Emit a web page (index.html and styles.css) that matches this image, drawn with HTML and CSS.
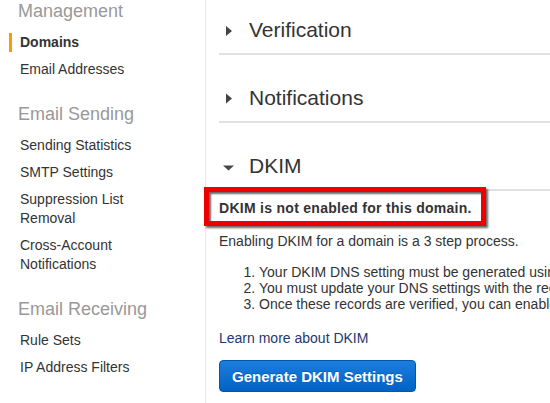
FILE: index.html
```html
<!DOCTYPE html>
<html lang="en">
<head>
<meta charset="utf-8">
<title>SES Domains - DKIM</title>
<link rel="stylesheet" href="styles.css">
</head>
<body>
<div class="page">
  <nav class="sidebar">
    <div class="nav-group">
      <h3 class="nav-title">Management</h3>
      <ul class="nav-list">
        <li class="nav-item active">Domains</li>
        <li class="nav-item">Email Addresses</li>
      </ul>
    </div>
    <div class="nav-group">
      <h3 class="nav-title">Email Sending</h3>
      <ul class="nav-list">
        <li class="nav-item">Sending Statistics</li>
        <li class="nav-item">SMTP Settings</li>
        <li class="nav-item">Suppression List Removal</li>
        <li class="nav-item">Cross-Account Notifications</li>
      </ul>
    </div>
    <div class="nav-group">
      <h3 class="nav-title">Email Receiving</h3>
      <ul class="nav-list">
        <li class="nav-item">Rule Sets</li>
        <li class="nav-item">IP Address Filters</li>
      </ul>
    </div>
  </nav>
  <main class="main">
    <section class="section">
      <div class="section-head">
        <svg class="caret" width="20" height="12" viewBox="0 0 20 12"><polygon points="7,2 13,7 7,12" fill="#444"/></svg>
        <span>Verification</span>
      </div>
    </section>
    <section class="section">
      <div class="section-head">
        <svg class="caret" width="20" height="12" viewBox="0 0 20 12"><polygon points="7,1.5 13,6.5 7,11.5" fill="#444"/></svg>
        <span>Notifications</span>
      </div>
    </section>
    <section class="section">
      <div class="section-head">
        <svg class="caret" width="20" height="12" viewBox="0 0 20 12"><polygon points="4,5.5 15,5.5 9.5,10.5" fill="#444"/></svg>
        <span>DKIM</span>
      </div>
      <div class="alert">DKIM is not enabled for this domain.</div>
      <p class="intro">Enabling DKIM for a domain is a 3 step process.</p>
      <ol class="steps">
        <li>Your DKIM DNS setting must be generated using the button below.</li>
        <li>You must update your DNS settings with the records that you have generated.</li>
        <li>Once these records are verified, you can enable DKIM signing for this domain.</li>
      </ol>
      <a class="learn" href="#">Learn more about DKIM</a>
      <button class="btn-primary" type="button">Generate DKIM Settings</button>
    </section>
  </main>
</div>
</body>
</html>
```

FILE: styles.css
```css
html, body {
  margin: 0;
  padding: 0;
  overflow: hidden;
  background: #fff;
}

body {
  font-family: "Liberation Sans", Arial, sans-serif;
  color: #333;
  width: 550px;
  height: 403px;
}

.page {
  display: flex;
  height: 403px;
}

.sidebar {
  width: 205px;
  flex: none;
  border-right: 1px solid #e8e8e8;
}

.nav-group + .nav-group {
  margin-top: 24px;
}

.nav-title {
  margin: 0 0 11px;
  padding-left: 18px;
  font-size: 18px;
  line-height: 22px;
  font-weight: normal;
  color: #999;
}

.nav-list {
  list-style: none;
  margin: 0;
  padding: 0;
}

.nav-item {
  width: 135px;
  margin: 0 0 8px 9px;
  padding-left: 8px;
  border-left: 3px solid transparent;
  font-size: 14px;
  line-height: 19px;
  color: #333;
}

.nav-item.active {
  border-left-color: #f90;
  font-weight: bold;
}

.main {
  flex: 1;
  min-width: 0;
  padding: 17px 0 0 13px;
}

.section + .section {
  margin-top: 30px;
}

.section-head {
  display: flex;
  align-items: center;
  gap: 10px;
  padding-bottom: 10px;
  border-bottom: 2px solid #e1e1e1;
  font-size: 21px;
  line-height: 26px;
  color: #333;
}

.caret {
  flex: none;
  display: block;
}

.alert {
  position: relative;
  width: fit-content;
  margin: -4px 0 0 -15px;
  padding: 6px 9px 3px 10px;
  border: 5px solid #ee0000;
  background: #fff;
  box-shadow: 2px 2px 2px rgba(0, 0, 0, 0.6), inset 2px 2px 2px rgba(0, 0, 0, 0.6);
  font-size: 14px;
  line-height: 20px;
  font-weight: bold;
  letter-spacing: 0.28px;
  white-space: nowrap;
}

.intro {
  margin: 5px 0 0;
  font-size: 14px;
  line-height: 20px;
  white-space: nowrap;
}

.steps {
  margin: 13px 0 0;
  padding-left: 40px;
  font-size: 14px;
  line-height: 16px;
  white-space: nowrap;
}

.learn {
  display: block;
  margin-top: 16px;
  font-size: 14px;
  line-height: 20px;
  color: #23396b;
  text-decoration: none;
}

.btn-primary {
  display: block;
  margin-top: 12px;
  height: 32px;
  padding: 0 12px;
  border: 1px solid #0057ad;
  border-radius: 4px;
  background: linear-gradient(#1c7ddd, #0062c4);
  color: #fff;
  font-family: inherit;
  font-size: 15px;
  font-weight: bold;
  text-shadow: 0 -1px 0 rgba(0, 0, 0, 0.2);
  cursor: pointer;
}
```
